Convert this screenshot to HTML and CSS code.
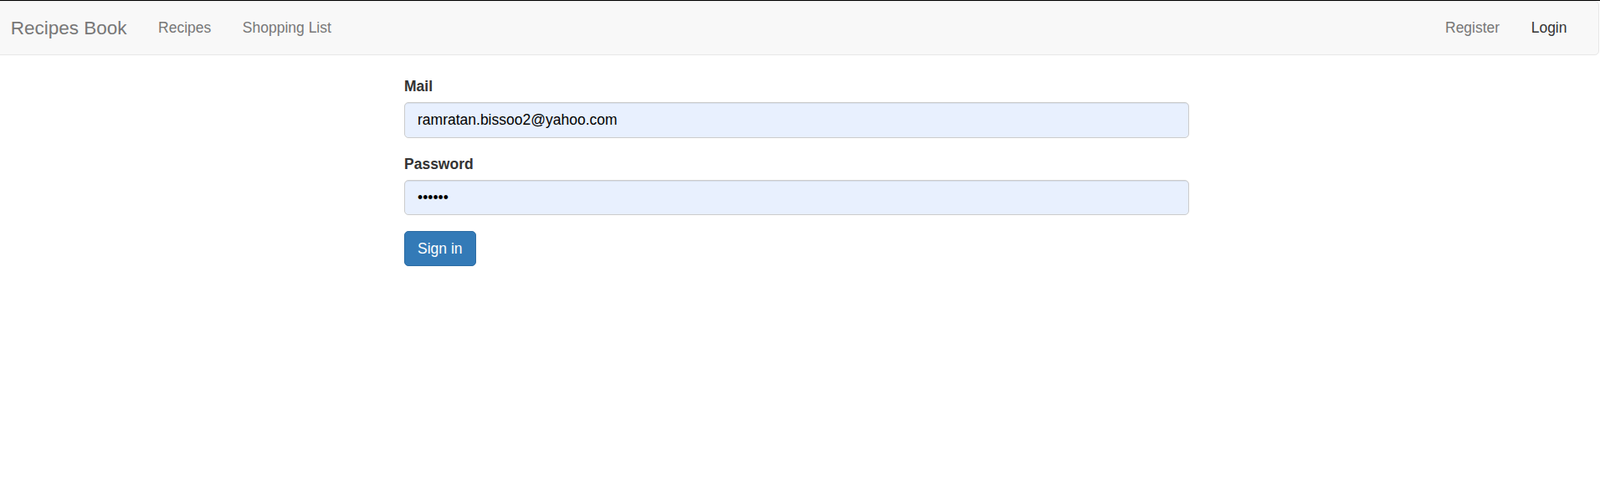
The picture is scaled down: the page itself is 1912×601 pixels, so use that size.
FILE: index.html
```html
<!DOCTYPE html>
<html lang="en">
<head>
<meta charset="utf-8">
<title>Recipes Book</title>
<link rel="stylesheet" href="styles.css">
</head>
<body>
<div class="topline"></div>
<nav class="navbar">
  <div class="nav-left">
    <a class="brand" href="#">Recipes Book</a>
    <ul class="nav">
      <li><a href="#">Recipes</a></li>
      <li><a href="#">Shopping List</a></li>
    </ul>
  </div>
  <ul class="nav nav-right">
    <li><a href="#">Register</a></li>
    <li><a class="active" href="#">Login</a></li>
  </ul>
</nav>
<main class="page">
  <form class="signin">
    <div class="form-group">
      <label for="mail">Mail</label>
      <input id="mail" class="form-control" type="email" value="ramratan.bissoo2@yahoo.com">
    </div>
    <div class="form-group">
      <label for="password">Password</label>
      <input id="password" class="form-control" type="password" value="123456">
    </div>
    <button class="btn-primary" type="submit">Sign in</button>
  </form>
</main>
</body>
</html>
```
FILE: styles.css
```css
* { box-sizing: border-box; }
html, body { margin: 0; padding: 0; }
body {
  font-family: "Liberation Sans", Arial, Helvetica, sans-serif;
  font-size: 17.5px;
  line-height: 25px;
  color: #333;
  background: #fff;
  overflow: hidden;
}
.topline { height: 1px; background: #000; }
.navbar {
  display: flex;
  justify-content: space-between;
  align-items: stretch;
  height: 65px;
  margin-left: -7px;
  margin-right: 1px;
  padding: 0 18.75px;
  background: #f8f8f8;
  border: 1px solid #e7e7e7;
  border-radius: 5px;
}
.nav-left { display: flex; }
.brand {
  display: block;
  margin-left: -18.75px;
  padding: 19px 18.75px;
  font-size: 22.5px;
  line-height: 25px;
  color: #777;
  text-decoration: none;
}
.nav {
  display: flex;
  list-style: none;
  margin: 0;
  padding: 0;
}
.nav a {
  display: block;
  padding: 19px 18.75px;
  line-height: 25px;
  color: #777;
  text-decoration: none;
}
.nav a.active { color: #333; }
.page {
  display: flex;
  justify-content: center;
  padding-top: 25px;
}
.signin {
  width: 938px;
  margin-right: 8px;
}
.form-group { margin-bottom: 18.75px; }
label {
  display: block;
  font-weight: bold;
  margin-bottom: 6.25px;
}
.form-control {
  display: block;
  width: 100%;
  height: 42.5px;
  padding: 7.5px 15px;
  font-family: inherit;
  font-size: 17.5px;
  line-height: 25px;
  color: #000;
  background: #e8f0fe;
  border: 1px solid #ccc;
  border-radius: 5px;
  box-shadow: inset 0 1px 1px rgba(0,0,0,.075);
  outline: none;
}
.btn-primary {
  display: inline-block;
  padding: 7.5px 15px;
  font-family: inherit;
  font-size: 17.5px;
  line-height: 25px;
  color: #fff;
  background: #337ab7;
  border: 1px solid #2e6da4;
  border-radius: 5px;
  cursor: pointer;
}
```
